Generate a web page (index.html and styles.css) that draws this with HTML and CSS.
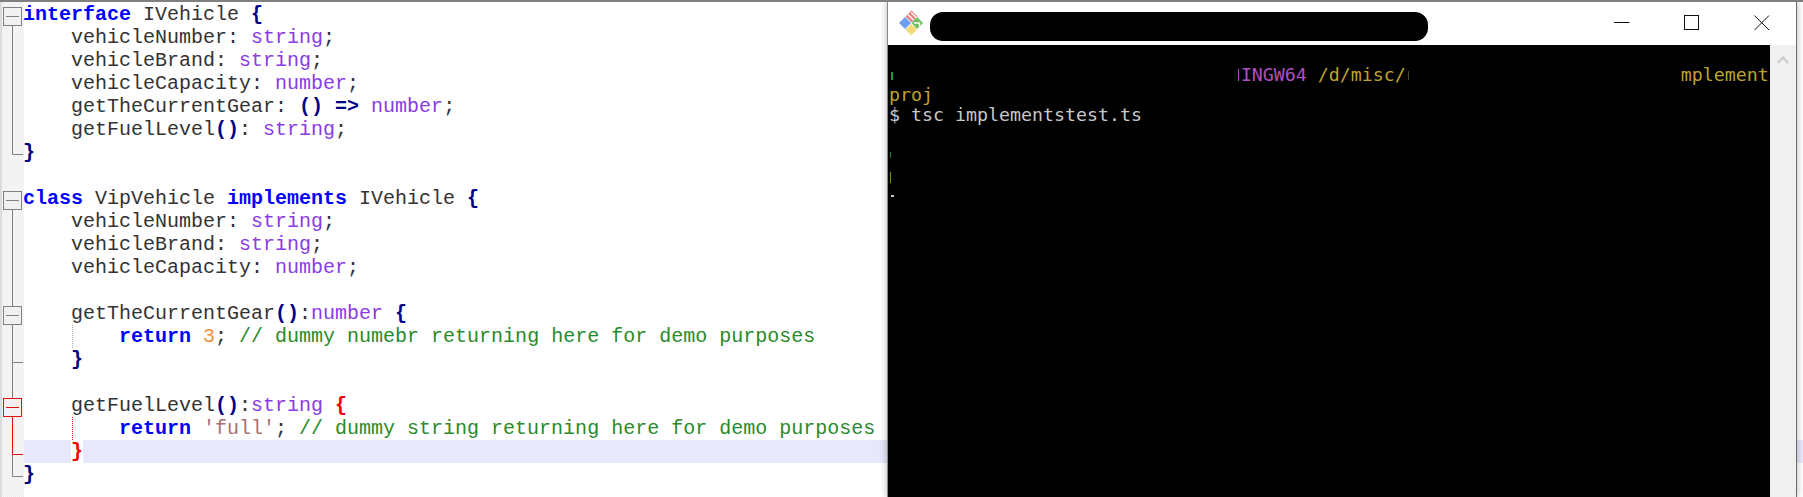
FILE: index.html
```html
<!DOCTYPE html>
<html lang="en">
<head>
<meta charset="utf-8">
<title>implementstest.ts</title>
<link rel="stylesheet" href="styles.css">
</head>
<body>
<main class="screen">
  <section class="editor">
    <div class="gutter">
      <svg class="folds" width="24" height="494" viewBox="0 0 24 494">
        <g class="fold-gray">
          <path d="M12.5 24V152.5H23"/>
          <path d="M12.5 208V474.5H23"/>
          <path d="M12.5 360.5H23"/>
          <rect x="3.5" y="5.5" width="18" height="18"/><path d="M6 14.5H19"/>
          <rect x="3.5" y="189.5" width="18" height="18"/><path d="M6 198.5H19"/>
          <rect x="3.5" y="304.5" width="18" height="18"/><path d="M6 313.5H19"/>
        </g>
        <g class="fold-red">
          <path d="M12.5 415V452.5H23"/>
          <rect x="3.5" y="396.5" width="18" height="18"/><path d="M6 405.5H19"/>
        </g>
      </svg>
    </div>
    <div class="code">
      <div class="ln"><b class="kw">interface</b> IVehicle <b class="op">{</b></div>
      <div class="ln">    vehicleNumber: <span class="ty">string</span>;</div>
      <div class="ln">    vehicleBrand: <span class="ty">string</span>;</div>
      <div class="ln">    vehicleCapacity: <span class="ty">number</span>;</div>
      <div class="ln">    getTheCurrentGear: <b class="op">()</b> <b class="op">=&gt;</b> <span class="ty">number</span>;</div>
      <div class="ln">    getFuelLevel<b class="op">()</b>: <span class="ty">string</span>;</div>
      <div class="ln"><b class="op">}</b></div>
      <div class="ln"></div>
      <div class="ln"><b class="kw">class</b> VipVehicle <b class="kw">implements</b> IVehicle <b class="op">{</b></div>
      <div class="ln">    vehicleNumber: <span class="ty">string</span>;</div>
      <div class="ln">    vehicleBrand: <span class="ty">string</span>;</div>
      <div class="ln">    vehicleCapacity: <span class="ty">number</span>;</div>
      <div class="ln"></div>
      <div class="ln">    getTheCurrentGear<b class="op">()</b>:<span class="ty">number</span> <b class="op">{</b></div>
      <div class="ln guide">        <b class="kw">return</b> <span class="num">3</span>; <span class="cm">// dummy numebr returning here for demo purposes</span></div>
      <div class="ln">    <b class="op">}</b></div>
      <div class="ln"></div>
      <div class="ln">    getFuelLevel<b class="op">()</b>:<span class="ty">string</span> <b class="match">{</b></div>
      <div class="ln guide-red">        <b class="kw">return</b> <span class="str">'full'</span>; <span class="cm">// dummy string returning here for demo purposes</span></div>
      <div class="ln current">    <b class="match match-bg">}</b></div>
      <div class="ln"><b class="op">}</b></div>
    </div>
  </section>

  <section class="window">
    <header class="titlebar">
      <svg class="git-icon" width="24" height="26" viewBox="0 0 24 26">
        <polygon class="g-blue" points="0,13 6,7 12,13 6,19"/>
        <polygon class="g-red" points="6.5,6.5 12.5,0.5 18.5,6.5 12.5,12.5"/>
        <polygon class="g-green" points="12.5,13 18,7 24,13 18,19"/>
        <polygon class="g-yellow" points="6.5,19.5 12,14 18,19.5 12,25.5"/>
        <path class="g-line" d="M9 4.5 14.5 10M12 2.5 17.500 8M15 13H20.500V16.500"/>
      </svg>
      <div class="redacted"></div>
      <div class="controls">
        <svg width="16" height="16" viewBox="0 0 16 16"><path d="M0 7.500H15.500"/></svg>
        <svg width="16" height="16" viewBox="0 0 16 16"><rect x="0.500" y="0.500" width="14" height="14"/></svg>
        <svg width="16" height="16" viewBox="0 0 16 16"><path d="M.5.500 15 15M15 .500.500 15"/></svg>
      </div>
    </header>
    <div class="console">
      <div class="terminal">
        <div class="t-row"><i class="frag f-green"></i>                              <i class="frag f-mag"></i><span class="t-mag">INGW64</span> <span class="t-yel">/d/misc/</span><i class="frag f-dim"></i>                        <span class="t-yel">mplement</span></div>
        <div class="t-row t-yel">proj</div>
        <div class="t-row">$ tsc implementstest.ts</div>
        <div class="t-row"></div>
        <div class="t-row"><i class="frag f-green2"></i></div>
        <div class="t-row"><i class="frag f-olive"></i></div>
        <div class="t-row"><i class="frag f-white"></i></div>
      </div>
      <div class="scrollbar">
        <svg class="chevron" width="12" height="10" viewBox="0 0 12 10"><path d="M1 8 6 2.500 11 8"/></svg>
      </div>
    </div>
  </section>
</main>
</body>
</html>
```

FILE: styles.css
```css
* { box-sizing: border-box; }

html, body {
  margin: 0;
  padding: 0;
  background: #fff;
}

.screen {
  position: relative;
  width: 1803px;
  height: 497px;
  overflow: hidden;
  border-top: 2px solid #808080;
}

/* Editor */
.editor {
  display: flex;
  height: 495px;
  background: #fff;
}

.gutter {
  flex: 0 0 24px;
  background:
    linear-gradient(#dcdcdc, #dcdcdc) 0 0 / 2px 100% no-repeat,
    repeating-conic-gradient(#ececec 0 25%, #fafafa 0 50%) 0 0 / 2px 2px;
}

.folds {
  display: block;
}

.folds rect {
  fill: #f1f1f1;
}

.folds path,
.folds rect {
  stroke-width: 1;
}

.folds path {
  fill: none;
}

.fold-gray path,
.fold-gray rect {
  stroke: #808080;
}

.fold-red path,
.fold-red rect {
  stroke: #e01010;
}

.code {
  flex: 1;
  padding-top: 1px;
  font-family: "Liberation Mono", monospace;
  font-size: 20px;
  color: #333;
  text-indent: -1px;
}

.ln {
  height: 23px;
  line-height: 23px;
  white-space: pre;
}

.guide {
  background: repeating-linear-gradient(to bottom, #b0b0b0 0 1px, transparent 1px 2px) 48px 0 / 1px 100% no-repeat;
}

.guide-red {
  background: repeating-linear-gradient(to bottom, #e01010 0 1px, transparent 1px 2px) 48px 0 / 1px 100% no-repeat;
}

.current {
  background: #e7e8fb;
}

.kw { color: #0000ff; font-weight: 700; }
.op { color: #000080; font-weight: 700; }
.ty { color: #8a3ae6; }
.num { color: #f09040; }
.str { color: #a87070; }
.cm { color: #2a8a2a; }
.match { color: #f00000; font-weight: 700; }
.match-bg { background: #fff; display: inline-block; text-indent: 0; }

/* Terminal window */
.window {
  position: absolute;
  top: 0;
  left: 887px;
  width: 910px;
  height: 495px;
  display: flex;
  flex-direction: column;
  border-left: 1px solid #8a8a8a;
  border-right: 1px solid #6a6a6a;
  box-shadow: 0 0 7px rgba(0, 0, 0, 0.3);
}

.titlebar {
  flex: 0 0 43px;
  display: flex;
  align-items: flex-start;
  background: #fff;
  padding-left: 11px;
  padding-right: 26px;
}

.git-icon {
  margin-top: 8px;
}

.g-blue { fill: #6f9ff0; }
.g-red { fill: #ee8080; }
.g-green { fill: #72bf62; }
.g-yellow { fill: #f4dc7a; }

.g-line {
  fill: none;
  stroke: #fff;
  stroke-width: 1.300;
}

.redacted {
  width: 498px;
  height: 29px;
  margin-top: 10px;
  margin-left: 7px;
  background: #000;
  border-radius: 13px;
}

.controls {
  display: flex;
  gap: 54px;
  margin-left: auto;
  margin-top: 13px;
}

.controls svg {
  display: block;
  fill: none;
  stroke: #111;
  stroke-width: 1;
}

.console {
  flex: 1;
  display: flex;
  min-height: 0;
}

.terminal {
  flex: 1;
  background: #000;
  padding: 20px 0 0 1px;
  font-family: "DejaVu Sans Mono", monospace;
  font-size: 18.27px;
  color: #c8c8c8;
  overflow: hidden;
}

.t-row {
  height: 20px;
  line-height: 20px;
  white-space: pre;
}

.t-mag { color: #b04fc0; }
.t-yel { color: #bfa32c; }

.frag {
  display: inline-block;
  width: 1ch;
  height: 20px;
  vertical-align: top;
  background-repeat: no-repeat;
}

.f-green { background-image: linear-gradient(#1e9a3c, #1e9a3c); background-position: 2px 7px; background-size: 2px 8px; }
.f-mag { background-image: linear-gradient(#b04fc0, #b04fc0); background-position: 8px 4px; background-size: 1px 12px; }
.f-dim { background-image: linear-gradient(#4a4a30, #4a4a30); background-position: 2px 6px; background-size: 1px 9px; }
.f-green2 { background-image: linear-gradient(#1e7a34, #1e7a34); background-position: 1px 7px; background-size: 1px 6px; }
.f-olive { background-image: linear-gradient(#8a8a20, #8a8a20); background-position: 1px 7px; background-size: 1px 11px; }
.f-white { background-image: linear-gradient(#c8c8c8, #c8c8c8); background-position: 2px 10px; background-size: 3px 2px; }

.scrollbar {
  flex: 0 0 26px;
  background: #f0f0f0;
  padding: 10px 0 0 7px;
}

.chevron {
  display: block;
  fill: none;
  stroke: #cdcdcd;
  stroke-width: 2.500;
}
```
